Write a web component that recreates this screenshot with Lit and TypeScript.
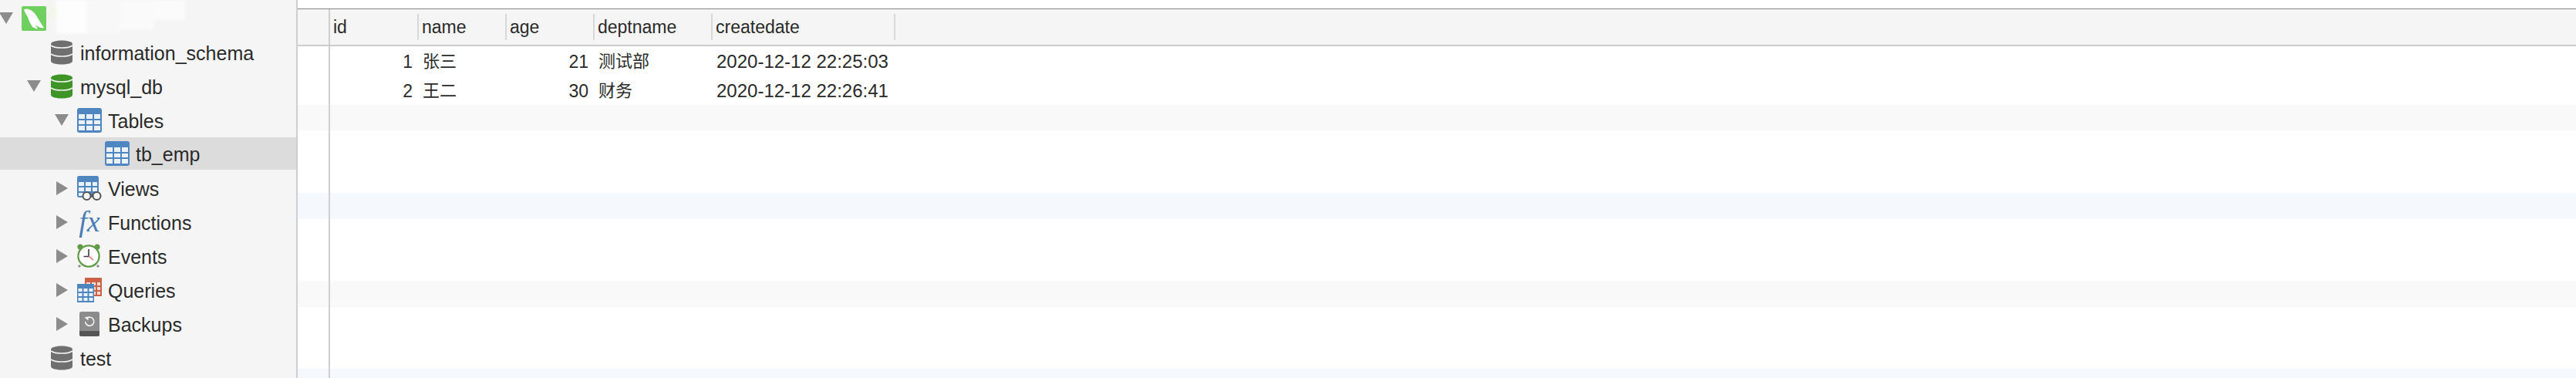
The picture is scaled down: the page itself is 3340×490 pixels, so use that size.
import { LitElement, css, html } from 'lit';
import { customElement } from 'lit/decorators.js';

const CELLS =
  'M2 8h8v6H2zM12 8h8v6h-8zM22 8h8v6h-8zM2 16h8v5H2zM12 16h8v5h-8zM22 16h8v5h-8zM2 23h8v6H2zM12 23h8v6h-8zM22 23h8v6h-8z';

const dbIcon = (color: string) => html`
  <svg width="28" height="32" viewBox="0 0 28 32">
    <path d="M0 5C0 -1 28 -1 28 5V27C28 33 0 33 0 27Z" fill=${color} />
    <path d="M0 7C6 11 22 11 28 7M0 18C6 22 22 22 28 18" fill="none" stroke="#f2f2f2" stroke-width="1.6" />
  </svg>
`;

const tableIcon = html`
  <svg width="32" height="32" viewBox="0 0 32 32">
    <rect width="32" height="32" rx="3" fill="#4f86c0" />
    <path d=${CELLS} fill="#e9f1f9" />
  </svg>
`;

const viewsIcon = html`
  <svg width="32" height="32" viewBox="0 0 32 32">
    <rect width="28" height="28" rx="2.5" fill="#4f86c0" />
    <path d="M2 8h7v5H2zM11 8h7v5h-7zM20 8h6v5h-6zM2 15h7v5H2zM11 15h7v5h-7zM20 15h6v5h-6zM2 22h7v4H2z" fill="#e9f1f9" />
    <circle cx="12.5" cy="26" r="5" fill="#f5f5f5" stroke="#555" stroke-width="2" />
    <circle cx="25.5" cy="26" r="5" fill="#f5f5f5" stroke="#555" stroke-width="2" />
    <path d="M17 25.5h4" stroke="#555" stroke-width="2" />
  </svg>
`;

const eventsIcon = html`
  <svg width="32" height="32" viewBox="0 0 32 32">
    <circle cx="4" cy="4" r="3.6" fill="#5f9a45" />
    <circle cx="26" cy="4" r="3.6" fill="#5f9a45" />
    <path d="M4 28l-2 2M26 28l2 2" stroke="#8a8a8a" stroke-width="3" />
    <circle cx="15" cy="16" r="13.6" fill="#fff" stroke="#5f9a45" stroke-width="2.2" />
    <path d="M15 16.5V7M15 16.5H8.5" fill="none" stroke="#3c3c3c" stroke-width="1.6" />
    <path d="M15 16l6 5" stroke="#dc6a62" stroke-width="1.5" />
  </svg>
`;

const queriesIcon = html`
  <svg width="32" height="32" viewBox="0 0 32 32">
    <rect x="10" width="22" height="24" fill="#cc6245" />
    <path d="M12 6h5v4h-5zM19 6h5v4h-5zM26 6h4v4h-4zM19 12h5v4h-5zM26 12h4v4h-4zM19 18h5v4h-5zM26 18h4v4h-4z" fill="#f3ddd4" />
    <rect y="8" width="22" height="24" fill="#4f86c0" />
    <path d="M1.5 14h5v4h-5zM8.5 14h5v4h-5zM15.5 14h5v4h-5zM1.5 20h5v4h-5zM8.5 20h5v4h-5zM15.5 20h5v4h-5zM1.5 26h5v4h-5zM8.5 26h5v4h-5zM15.5 26h5v4h-5z" fill="#e9f1f9" />
  </svg>
`;

const backupsIcon = html`
  <svg width="32" height="32" viewBox="0 0 32 32">
    <rect x="3" width="26" height="32" rx="2.5" fill="#8c8c8c" />
    <path d="M3 25H29V29.5A2.5 2.5 0 0 1 26.5 32H5.5A2.5 2.5 0 0 1 3 29.5Z" fill="#565656" />
    <path d="M12.5 8.5A5.6 5.6 0 1 1 10.6 13" fill="none" stroke="#f4f4f4" stroke-width="1.6" />
    <path d="M9.5 7.5L14.5 6.5V11.5Z" fill="#f4f4f4" />
  </svg>
`;

const rootIcon = html`
  <svg width="32" height="32" viewBox="0 0 32 32">
    <rect width="32" height="32" rx="2" fill="#6fcf5f" />
    <path
      d="M3 4L7 3.5C11 4 16 7 19 12C21 16 24 20 29 28C25 29 21 27 18 24L21 30L14 27C12 23 9 19 8 14C6 11 4 8 3 4Z"
      fill="#fff"
    />
  </svg>
`;

const arrowDown = html`
  <svg width="18" height="18" viewBox="0 0 18 18"><path d="M0 1H18L9 16Z" fill="#8c8c8c" /></svg>
`;
const arrowRight = html`
  <svg width="18" height="18" viewBox="0 0 18 18"><path d="M2 0L17 9L2 18Z" fill="#8c8c8c" /></svg>
`;

interface TreeItem {
  level: number;
  label: string;
  icon: unknown;
  arrow?: 'open' | 'closed';
  selected?: boolean;
}

const TREE: TreeItem[] = [
  { level: 1, label: 'information_schema', icon: dbIcon('#6f6f6f') },
  { level: 1, label: 'mysql_db', icon: dbIcon('#3f9428'), arrow: 'open' },
  { level: 2, label: 'Tables', icon: tableIcon, arrow: 'open' },
  { level: 3, label: 'tb_emp', icon: tableIcon, selected: true },
  { level: 2, label: 'Views', icon: viewsIcon, arrow: 'closed' },
  { level: 2, label: 'Functions', icon: html`<span class="fx">fx</span>`, arrow: 'closed' },
  { level: 2, label: 'Events', icon: eventsIcon, arrow: 'closed' },
  { level: 2, label: 'Queries', icon: queriesIcon, arrow: 'closed' },
  { level: 2, label: 'Backups', icon: backupsIcon, arrow: 'closed' },
  { level: 1, label: 'test', icon: dbIcon('#6f6f6f') },
];

const COLUMNS = [
  ['id', 'c-id'],
  ['name', 'c-name'],
  ['age', 'c-age'],
  ['deptname', 'c-dept'],
  ['createdate', 'c-date'],
];

const ROWS = [
  ['1', '张三', '21', '测试部', '2020-12-12 22:25:03'],
  ['2', '王二', '30', '财务', '2020-12-12 22:26:41'],
];

// empty rows below the data, the tints repeat every 114px
const BANDS = ['gray', 'plain', 'blue', 'plain', 'gray', 'plain', 'blue'];

@customElement('app-root')
export class AppRoot extends LitElement {
  static styles = css`
    :host {
      display: flex;
      width: 3340px;
      height: 490px;
      overflow: hidden;
      background: #fff;
      color: #2a2a2a;
      font-family: 'Liberation Sans', 'Noto Sans CJK SC', sans-serif;
    }

    .sidebar {
      flex: none;
      width: 384px;
      padding-top: 2px;
      box-sizing: border-box;
      background: #f5f5f5;
      overflow: hidden;
      font-size: 25px;
    }

    .divider {
      flex: none;
      width: 2px;
      background: #cfcfcf;
    }

    .tree {
      margin-left: -1px;
    }

    .node {
      display: flex;
      align-items: center;
      height: 44px;
      white-space: nowrap;
    }

    .node.selected {
      height: 42px;
      margin-bottom: 2px;
      background: #dcdcdc;
    }

    .arrow {
      flex: none;
      display: flex;
      width: 29px;
    }

    .icon {
      flex: none;
      display: flex;
      align-items: center;
      justify-content: center;
      width: 32px;
      height: 32px;
      margin-right: 8px;
    }

    .label {
      padding-top: 2px;
    }

    .fx {
      margin-bottom: 2px;
      font: italic 38px 'Liberation Serif', serif;
      color: #4a7db5;
    }

    .smudge {
      align-self: flex-start;
      flex: none;
      width: 180px;
      height: 46px;
      margin: -2px 0 0 -5px;
      filter: blur(2px);
      background:
        linear-gradient(#fdfdfd, #fdfdfd) 10px 0 / 40px 44px no-repeat,
        linear-gradient(#f2f6e8, #f2f6e8) 0 8px / 10px 16px no-repeat,
        linear-gradient(#f8f8f8, #f8f8f8) 50px 0 / 44px 44px no-repeat,
        linear-gradient(#fafafa, #fafafa) 94px 0 / 43px 38px no-repeat,
        linear-gradient(#fbfbfb, #fbfbfb) 137px 0 / 40px 25px no-repeat;
    }

    .main {
      flex: 1;
      display: flex;
      flex-direction: column;
      padding-top: 11px;
      min-width: 0;
      font-size: 23px;
    }

    .gutter {
      flex: none;
      width: 40px;
      align-self: stretch;
      border-right: 2px solid #cfcfcf;
    }

    .head {
      flex: none;
      display: flex;
      height: 46px;
      background: #f5f5f5;
      border-top: 1px solid #858585;
      border-bottom: 2px solid #cdcdcd;
    }

    .head-cell {
      display: flex;
      align-items: center;
      justify-content: space-between;
      padding-left: 4px;
      box-sizing: border-box;
    }

    .sep {
      width: 2px;
      height: 34px;
      background: #d8d8d8;
    }

    .c-id {
      width: 115px;
    }
    .c-name {
      width: 114px;
    }
    .c-age {
      width: 114px;
    }
    .c-dept {
      width: 153px;
    }
    .c-date {
      width: 237px;
    }

    .body {
      flex: 1;
      display: flex;
      flex-direction: column;
    }

    .row {
      display: flex;
      flex: none;
      height: 38px;
      line-height: 40px;
    }

    .data {
      flex: none;
      height: 76px;
    }

    .cell {
      box-sizing: border-box;
      padding-left: 5px;
      white-space: nowrap;
    }

    .cell.num {
      padding: 0 8px 0 0;
      text-align: right;
    }

    .cell.cjk {
      font-size: 22px;
    }

    .cell.c-date {
      font-size: 24px;
    }

    .band {
      display: flex;
      flex: none;
      height: 34px;
    }
    .band.plain {
      height: 80px;
    }
    .band.gray {
      background: #f9f9f9;
    }
    .band.blue {
      background: #f5f9fe;
    }
  `;

  private renderNode(item: TreeItem) {
    return html`
      <div class="node ${item.selected ? 'selected' : ''}" style="padding-left:${item.level * 36}px">
        <span class="arrow">
          ${item.arrow === 'open' ? arrowDown : item.arrow === 'closed' ? arrowRight : ''}
        </span>
        <span class="icon">${item.icon}</span>
        <span class="label">${item.label}</span>
      </div>
    `;
  }

  private cellClass(i: number) {
    if (i === 0 || i === 2) return 'num';
    return i === 4 ? '' : 'cjk';
  }

  render() {
    return html`
      <aside class="sidebar">
        <div class="tree">
          <div class="node">
            <span class="arrow">${arrowDown}</span>
            <span class="icon">${rootIcon}</span>
            <span class="smudge"></span>
          </div>
          ${TREE.map((item) => this.renderNode(item))}
        </div>
      </aside>
      <div class="divider"></div>
      <main class="main">
        <div class="head">
          <div class="gutter"></div>
          ${COLUMNS.map(
            ([title, cls]) => html`
              <div class="head-cell ${cls}">
                <span>${title}</span>
                <span class="sep"></span>
              </div>
            `
          )}
        </div>
        <div class="body">
          <div class="data">
            ${ROWS.map(
              (row) => html`
                <div class="row">
                  <div class="gutter"></div>
                  ${row.map(
                    (value, i) => html`<div class="cell ${COLUMNS[i][1]} ${this.cellClass(i)}">${value}</div>`
                  )}
                </div>
              `
            )}
          </div>
          ${BANDS.map((tint) => html`<div class="band ${tint}"><div class="gutter"></div></div>`)}
        </div>
      </main>
    `;
  }
}

declare global {
  interface HTMLElementTagNameMap {
    'app-root': AppRoot;
  }
}
